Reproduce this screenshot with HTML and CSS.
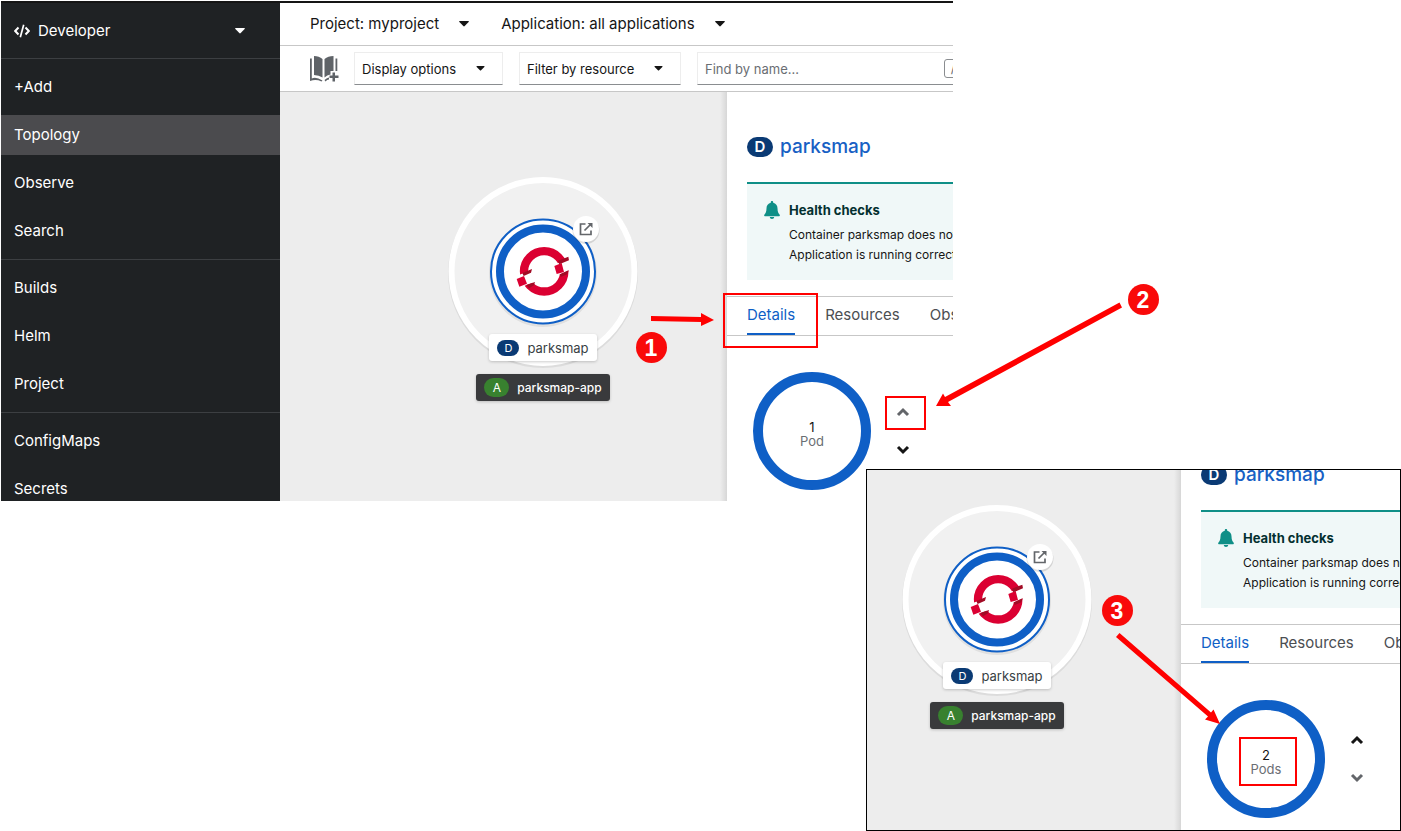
FILE: index.html
```
<!DOCTYPE html>
<html lang="en">
<head>
<meta charset="utf-8">
<title>Scaling the parksmap deployment</title>
<link rel="stylesheet" href="styles.css">
</head>
<body>
<svg class="defs" aria-hidden="true">
  <symbol id="caret" viewBox="0 0 10 6"><path d="M.6 0h8.8q.8.4.2 1.1L5.700 5.100q-.7.6-1.400 0L.4 1.100Q-.2.4.6 0z" fill="currentColor"/></symbol>
  <symbol id="chev-up" viewBox="0 0 14 10"><path d="M2 8l5-5 5 5" fill="none" stroke="currentColor" stroke-width="3"/></symbol>
  <symbol id="chev-down" viewBox="0 0 14 10"><path d="M2 2l5 5 5-5" fill="none" stroke="currentColor" stroke-width="3"/></symbol>
  <symbol id="bell" viewBox="0 0 16 18"><path d="M8 0c.7 0 1.200.5 1.200 1.200v.6c2.600.6 4.300 2.700 4.300 5.400 0 3.700.9 5 2 6.200.8.9.2 1.800-.7 1.800H1.200c-.9 0-1.500-.9-.7-1.800 1.100-1.200 2-2.500 2-6.200 0-2.700 1.700-4.800 4.300-5.400v-.6C6.800.5 7.300 0 8 0zM5.800 16h4.400c0 1.200-1 2-2.200 2s-2.200-.8-2.200-2z" fill="#0f8f87"/></symbol>
  <symbol id="node" viewBox="0 0 200 200">
    <circle cx="100" cy="101" r="95" fill="#000" opacity=".07"/>
    <circle cx="100" cy="99.500" r="91.500" fill="#f1f1f1" stroke="#fff" stroke-width="6"/>
    <circle cx="100" cy="101" r="54" fill="#000" opacity=".07"/>
    <circle cx="100" cy="99.500" r="52" fill="#fff" stroke="#0f5fc6" stroke-width="2"/>
    <circle cx="100" cy="99.500" r="43" fill="#fff" stroke="#0f5fc6" stroke-width="8"/>
    <g transform="translate(72 68) scale(.3333)">
      <circle cx="87.500" cy="94" r="60.500" fill="none" stroke="#db0032" stroke-width="25"/>
      <path d="M112 76L165 57V89L134 104zM4 108L50 90 60 126 34 135 8 147z" fill="#fff"/>
      <path d="M118 78l22-9 7 27-22 6zM5 117l22-9 9 23-23 9z" fill="#db0032"/>
      <path d="M129 62l31-12 2 11-29 12zM134 103l27-12-4 12-20 8zM22 99l29-12-3 11-22 10zM34 135l26-9-3 10-15 9z" fill="#a20b25"/>
    </g>
    <circle cx="143" cy="58.500" r="13.500" fill="#000" opacity=".12"/>
    <circle cx="143" cy="57" r="13" fill="#fff"/>
    <path d="M142.500 52H137.500V62.500H148V58.500M141.500 58.500L147.500 52.500" fill="none" stroke="#63666a" stroke-width="1.700"/>
    <path d="M144.500 51H149.500V56z" fill="#63666a"/>
  </symbol>
</svg>

<main class="board">
  <figure class="figure figure-main">
    <div class="shot shot-main">
      <nav class="sidebar" aria-label="Developer navigation">
        <button class="perspective" type="button">
          <svg class="code" viewBox="0 0 16 14" aria-hidden="true"><path d="M4.500 3.500L1.200 7l3.300 3.500M11.500 3.500L14.800 7l-3.300 3.500" fill="none" stroke="#fff" stroke-width="2"/><path d="M9.700.8L6.300 13.200" stroke="#fff" stroke-width="1.700"/></svg>
          <span>Developer</span>
          <svg class="caret" aria-hidden="true"><use href="#caret"/></svg>
        </button>
        <ul class="nav-group"><li><a href="#">+Add</a></li><li><a class="current" href="#">Topology</a></li><li><a href="#">Observe</a></li><li><a href="#">Search</a></li></ul>
        <ul class="nav-group"><li><a href="#">Builds</a></li><li><a href="#">Helm</a></li><li><a href="#">Project</a></li></ul>
        <ul class="nav-group nav-last"><li><a href="#">ConfigMaps</a></li><li><a href="#">Secrets</a></li></ul>
      </nav>
      <div class="workspace">
        <div class="context-bar">
          <button type="button">Project: myproject <svg class="caret" aria-hidden="true"><use href="#caret"/></svg></button>
          <button type="button">Application: all applications <svg class="caret" aria-hidden="true"><use href="#caret"/></svg></button>
        </div>
        <div class="toolbar">
          <button class="catalog" type="button" aria-label="Add to project">
            <svg viewBox="0 0 29 26"><g fill="#5f6368"><path d="M4 0Q9 0 12.500 3V21.500Q9 19 4 19zM14.500 3Q18 0 23.500 0V15H20.500V18.500Q17 19 14.500 21.500z"/><path d="M0 2.500H1.800V22.500Q6 20.500 12.500 24.500L11.500 25.500Q6 23 0 25zM25.500 2.500H27.300V15H25.500zM14.500 24Q17 21.500 19 21.500V23.500Q17 23.500 15.500 25.500zM22.500 16.500H25V19.500H28.500V22H25V25.500H22.500V22H19.500V19.500H22.500z"/></g></svg>
          </button>
          <button class="select select-display" type="button">Display options <svg class="caret small" aria-hidden="true"><use href="#caret"/></svg></button>
          <button class="select select-filter" type="button">Filter by resource <svg class="caret small" aria-hidden="true"><use href="#caret"/></svg></button>
          <div class="search"><input type="text" aria-label="Find by name" placeholder="Find by name..."><kbd>/</kbd></div>
        </div>
        <div class="view">
          <div class="graph">
            <div class="node">
              <svg class="node-art" aria-hidden="true"><use href="#node"/></svg>
              <div class="label"><span class="pill">D</span>parksmap</div>
              <div class="label label-app"><span class="pill pill-app">A</span>parksmap-app</div>
            </div>
          </div>
          <section class="panel">
            <h1 class="title"><span class="kind">D</span><a href="#">parksmap</a></h1>
            <div class="alert">
              <svg class="bell" aria-hidden="true"><use href="#bell"/></svg>
              <div><h2>Health checks</h2><p>Container parksmap does not</p><p>Application is running correctly</p></div>
            </div>
            <div class="tabs" role="tablist"><button class="active" type="button" role="tab" aria-selected="true">Details</button><button type="button" role="tab">Resources</button><button type="button" role="tab">Observe</button></div>
            <div class="pods">
              <div class="ring"><span class="count">1</span><span class="unit">Pod</span></div>
              <div class="stepper">
                <button class="muted" type="button" aria-label="Increase the Pod count"><svg><use href="#chev-up"/></svg></button>
                <button type="button" aria-label="Decrease the Pod count"><svg><use href="#chev-down"/></svg></button>
              </div>
            </div>
          </section>
        </div>
      </div>
    </div>
    <svg class="notes notes-main" viewBox="620 270 560 160" aria-hidden="true">
      <g fill="none" stroke="#f00" stroke-width="2"><rect x="724" y="294" width="93" height="53"/><rect x="886" y="397" width="39" height="32"/></g>
      <path d="M651 316L701 317V313L714 320 701 326V322L651 321z" fill="#f00"/>
      <path d="M1119.500 302.500L945 397 943 393.500 936 406H951L948 402 1122 307.500z" fill="#f00"/>
      <circle cx="651.500" cy="347.500" r="15.500" fill="#f90a0a"/><circle cx="1143.500" cy="299.500" r="15.500" fill="#f90a0a"/>
      <text class="step" x="651" y="356">1</text><text class="step" x="1143" y="308">2</text>
    </svg>
  </figure>

  <figure class="figure figure-inset">
    <div class="shot shot-inset">
      <div class="view">
        <div class="graph">
          <div class="node">
            <svg class="node-art" aria-hidden="true"><use href="#node"/></svg>
            <div class="label"><span class="pill">D</span>parksmap</div>
            <div class="label label-app"><span class="pill pill-app">A</span>parksmap-app</div>
          </div>
        </div>
        <section class="panel">
          <h1 class="title"><span class="kind">D</span><a href="#">parksmap</a></h1>
          <div class="alert">
            <svg class="bell" aria-hidden="true"><use href="#bell"/></svg>
            <div><h2>Health checks</h2><p>Container parksmap does not</p><p>Application is running correctly</p></div>
          </div>
          <div class="tabs" role="tablist"><button class="active" type="button" role="tab" aria-selected="true">Details</button><button type="button" role="tab">Resources</button><button type="button" role="tab">Observe</button></div>
          <div class="pods">
            <div class="ring"><span class="count">2</span><span class="unit">Pods</span></div>
            <div class="stepper">
              <button type="button" aria-label="Increase the Pod count"><svg><use href="#chev-up"/></svg></button>
              <button class="muted" type="button" aria-label="Decrease the Pod count"><svg><use href="#chev-down"/></svg></button>
            </div>
          </div>
        </section>
      </div>
    </div>
    <svg class="notes notes-inset" viewBox="1090 580 220 220" aria-hidden="true">
      <rect x="1240" y="738" width="56" height="47" fill="none" stroke="#f00" stroke-width="2"/>
      <path d="M1119.500 633L1211 712.500 1213.500 709.500 1220 724 1205 719.500 1208 716.500 1116 637z" fill="#f00"/>
      <circle cx="1117.500" cy="610.500" r="15.500" fill="#f90a0a"/>
      <text class="step" x="1117" y="619">3</text>
    </svg>
  </figure>
</main>
</body>
</html>
```
FILE: styles.css
```
* { box-sizing: border-box; }
body { margin: 0; background: #fff; color: #151515; font: 15px/24px Inter, "Liberation Sans", sans-serif; }
button, input { font: inherit; color: inherit; background: none; border: 0; padding: 0; margin: 0; }
a { color: inherit; text-decoration: none; }
h1, h2, p, ul, figure { margin: 0; padding: 0; }
ul { list-style: none; }
svg { display: block; flex: none; }
.defs { position: absolute; width: 0; height: 0; }

.board { position: relative; min-height: 100vh; padding: 1px 448px 0 1px; overflow: hidden; }
.figure-main { position: relative; }
.figure-inset { position: absolute; top: 469px; right: 0; width: 535px; }
.shot { display: flex; overflow: hidden; background: #fff; }
.shot-main { border-top: 2px solid #151515; }
.shot-inset { border: 1px solid #000; }

/* Sidebar */
.sidebar { flex: none; width: 279px; background: #1f2224; color: #fff; }
.perspective { display: flex; align-items: center; gap: 8px; width: 100%; height: 55px; padding: 0 35px 0 13px; }
.perspective .caret { margin-left: auto; }
.code { width: 16px; height: 14px; }
.caret { width: 10px; height: 6px; }
.caret.small { width: 9px; height: 5px; }
.nav-group { display: flex; flex-direction: column; gap: 8px; padding: 8px 0; border-top: 1px solid #3c3f42; }
.nav-group a { display: block; padding: 8px 13px; }
.nav-group .current { background: #4b4b4e; }
.nav-last { padding-bottom: 0; }
.nav-last li:last-child a { padding-bottom: 0; }

/* Bars above the graph */
.workspace { display: flex; flex: 1; flex-direction: column; min-width: 0; }
.context-bar { display: flex; gap: 32px; height: 43px; padding-left: 30px; border-bottom: 1px solid #c7c7c7; white-space: nowrap; }
.context-bar button { display: flex; align-items: center; gap: 20px; }
.toolbar { display: flex; align-items: center; height: 46px; padding-left: 30px; border-bottom: 1px solid #c7c7c7; overflow: hidden; font-size: 13px; white-space: nowrap; }
.catalog { margin-right: 15px; }
.catalog svg { width: 29px; height: 26px; }
.select, .search { display: flex; flex: none; align-items: center; justify-content: space-between; height: 33px; margin-right: 16px; padding: 0 17px 0 7px; border: 1px solid #ededed; border-bottom-color: #8a8d90; }
.select-display { width: 149px; }
.select-filter { width: 162px; }
.search { width: 283px; }
.search input { width: 239px; height: 30px; }
.search input::placeholder { color: #6a6e73; opacity: 1; }
kbd { flex: none; width: 18px; height: 19px; border: 1px solid #8a8d90; border-radius: 3px; color: #6a6e73; font: 13px/17px Inter, sans-serif; text-align: center; }

/* Topology graph */
.view { display: flex; flex: 1; min-width: 0; }
.graph { position: relative; flex: 1; min-width: 0; overflow: hidden; background: #ededed; }
.graph::after { content: ""; position: absolute; inset: 0 0 0 auto; width: 7px; background: linear-gradient(90deg, #0000, #00000018); }
.node { position: absolute; top: 80px; left: 163px; display: flex; flex-direction: column; align-items: center; width: 200px; }
.shot-inset .node { top: 30px; left: 30px; }
.node-art { width: 200px; height: 200px; }
.label { position: relative; display: flex; align-items: center; gap: 8px; height: 27px; margin-top: -38px; padding: 0 8px; border-radius: 3px; background: #fff; box-shadow: 0 1px 3px #0003; color: #393f44; font-size: 13px; }
.label-app { margin-top: 13px; background: #393a3c; color: #fff; font-size: 12px; font-weight: 500; }
.pill { width: 22px; height: 16px; border-radius: 8px; background: #0a3a74; color: #fff; font-size: 11px; line-height: 16px; text-align: center; }
.pill-app { width: 25px; height: 19px; border-radius: 10px; background: #38812f; font-size: 12px; line-height: 19px; font-weight: 400; }

/* Details panel */
.panel { flex: none; width: 226px; padding: 43px 0 10px; overflow: hidden; background: #fff; white-space: nowrap; }
.shot-inset .panel { width: 219px; margin-top: -50px; padding-bottom: 12px; }
.title { display: flex; align-items: center; gap: 7px; padding-left: 20px; color: #1760c4; font-size: 19px; font-weight: 500; line-height: 24px; }
.kind { width: 26px; height: 20px; border-radius: 10px; background: #0a3a74; color: #fff; font-size: 15px; font-weight: 600; line-height: 20px; text-align: center; }
.alert { display: flex; gap: 9px; height: 98px; margin: 23px 0 16px 20px; padding: 16px 0 0 17px; border-top: 2px solid #0f8f87; background: #f0f8f8; }
.bell { width: 16px; height: 18px; margin-top: 1px; }
.alert h2 { margin-bottom: 5px; color: #033030; font-size: 13px; font-weight: 700; line-height: 20px; }
.alert p { font-size: 12px; line-height: 20px; }
.tabs { display: flex; gap: 30px; height: 40px; padding-left: 20px; border: solid #c7c7c7; border-width: 1px 0; color: #4b4e52; }
.tabs button { flex: none; border-bottom: 2px solid transparent; }
.tabs .active { border-color: #0f5fc6; color: #0f5fc6; }
.pods { display: flex; align-items: center; gap: 25px; padding: 36px 0 0 26px; }
.ring { display: flex; flex: none; flex-direction: column; align-items: center; justify-content: center; width: 118px; height: 118px; padding-top: 6px; border: 10px solid #0f5fc6; border-radius: 50%; font-size: 13px; line-height: 14px; }
.unit { color: #6a6e73; }
.stepper { display: flex; flex-direction: column; gap: 14px; }
.stepper button { display: grid; place-items: center; width: 14px; height: 24px; }
.stepper svg { width: 14px; height: 10px; }
.muted { color: #63666a; }

/* Annotations */
.notes { position: absolute; overflow: visible; }
.notes-main { top: 269px; right: -227px; width: 560px; height: 160px; }
.notes-inset { top: 111px; right: 91px; width: 220px; height: 220px; }
.step { fill: #fff; font: 700 23px "Liberation Sans", sans-serif; text-anchor: middle; }
```
